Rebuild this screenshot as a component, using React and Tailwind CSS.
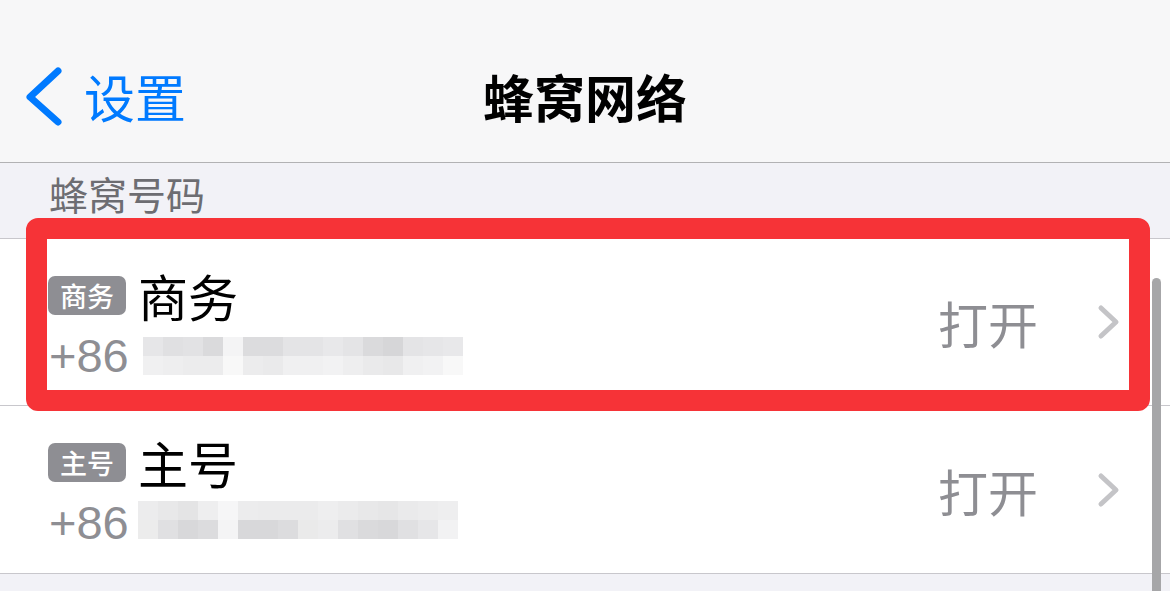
const cjk = "font-['Noto_Sans_CJK_SC','Noto_Sans',sans-serif]";

const blurBusiness = [
    ['bg-[#e6e6e8]', 'bg-[#e0e0e2]', 'bg-[#e2e2e4]', 'bg-[#dadadc]', 'bg-[#f4f4f5]', 'bg-[#dcdcde]', 'bg-[#dcdcde]', 'bg-[#e4e4e6]', 'bg-[#e4e4e6]', 'bg-[#e8e8ea]', 'bg-[#e4e4e6]', 'bg-[#dadadc]', 'bg-[#d6d6d8]', 'bg-[#e4e4e6]', 'bg-[#e6e6e8]', 'bg-[#e8e8ea]'],
    ['bg-[#f0f0f1]', 'bg-[#eeeeef]', 'bg-[#ececed]', 'bg-[#ececed]', 'bg-[#f8f8f8]', 'bg-[#ececed]', 'bg-[#eaeaeb]', 'bg-[#f0f0f1]', 'bg-[#f0f0f1]', 'bg-[#f2f2f3]', 'bg-[#eeeeef]', 'bg-[#eaeaeb]', 'bg-[#e8e8e9]', 'bg-[#f0f0f1]', 'bg-[#f2f2f3]', 'bg-[#f8f8f8]'],
];

const blurMain = [
    ['bg-[#ececed]', 'bg-[#e8e8e9]', 'bg-[#e4e4e5]', 'bg-[#eeeeef]', 'bg-[#f6f6f7]', 'bg-[#ececed]', 'bg-[#ebebec]', 'bg-[#ebebec]', 'bg-[#ebebec]', 'bg-[#eeeeef]', 'bg-[#ebebec]', 'bg-[#e8e8e9]', 'bg-[#e6e6e7]', 'bg-[#eaeaeb]', 'bg-[#ececed]', 'bg-[#eeeeef]'],
    ['bg-[#ececec]', 'bg-[#e0e0e2]', 'bg-[#d8d8da]', 'bg-[#dcdcde]', 'bg-[#f4f4f5]', 'bg-[#d8d8da]', 'bg-[#d8d8da]', 'bg-[#dcdcde]', 'bg-[#eaeaea]', 'bg-[#ececed]', 'bg-[#e0e0e2]', 'bg-[#dadadc]', 'bg-[#d8d8da]', 'bg-[#e0e0e2]', 'bg-[#e6e6e8]', 'bg-[#f2f2f3]'],
];

function Blur({ rows, offset }) {
    return (
        <div className={`flex flex-col ${offset}`}>
            {rows.map((row, r) => (
                <div key={r} className="flex">
                    {row.map((cls, c) => (
                        <div key={c} className={`h-[19px] w-[20px] ${cls}`} />
                    ))}
                </div>
            ))}
        </div>
    );
}

function Chevron() {
    return (
        <svg width="26" height="36" viewBox="0 0 26 36" className="shrink-0">
            <path d="M5 4 L20 18 L5 32" fill="none" stroke="#c4c4c7" strokeWidth="5" strokeLinecap="round" strokeLinejoin="round" />
        </svg>
    );
}

function SimRow({ badge, name, blur, blurOffset, bordered }) {
    return (
        <div className={`relative flex h-[167px] items-center ${bordered ? 'border-b border-[#c8c7cc]' : ''}`}>
            <div className="flex h-full flex-1 flex-col pl-[48px] pt-[26px]">
                <div className="flex h-[60px] items-center gap-[12px]">
                    <span className={`${cjk} flex h-[39px] w-[78px] items-center justify-center rounded-[7px] bg-[#8e8e93] text-[27px] font-medium leading-none text-white`}>
                        {badge}
                    </span>
                    <span className={`${cjk} text-[50px] leading-none text-black`}>{name}</span>
                </div>
                <div className="flex h-[60px] items-center">
                    <span className="pl-[1px] font-['Liberation_Sans',sans-serif] text-[47px] leading-none text-[#8e8e93]">+86</span>
                    <Blur rows={blur} offset={blurOffset} />
                </div>
            </div>
            <div className="flex items-center gap-[58px] pr-[48px]">
                <span className={`${cjk} text-[50px] leading-none text-[#8e8e93]`}>打开</span>
                <Chevron />
            </div>
        </div>
    );
}

export default function App() {
    return (
        <div className="relative h-[591px] w-[1170px] overflow-hidden bg-[#f2f2f7]">
            <header className="grid h-[163px] grid-cols-[1fr_auto_1fr] items-start border-b border-[#b2b2b4] bg-[#f7f7f8] pt-[60px]">
                <div className="flex h-[72px] items-center pl-[24px]">
                    <svg width="40" height="60" viewBox="0 0 40 60">
                        <path d="M34 5 L6 31 L34 56" fill="none" stroke="#007aff" strokeWidth="7" strokeLinecap="round" strokeLinejoin="round" />
                    </svg>
                    <span className={`${cjk} ml-[20px] text-[51px] leading-none text-[#007aff]`}>设置</span>
                </div>
                <h1 className={`${cjk} flex h-[72px] items-center text-[51px] font-bold leading-none text-black`}>蜂窝网络</h1>
                <div />
            </header>

            <div className="h-[75px] pl-[49px] pt-[8px]">
                <span className={`${cjk} text-[39px] leading-[44px] text-[#6d6d72]`}>蜂窝号码</span>
            </div>

            <section className="border-y border-[#c8c7cc] bg-white">
                <SimRow badge="商务" name="商务" blur={blurBusiness} blurOffset="ml-[14px] mt-[2px]" bordered />
                <SimRow badge="主号" name="主号" blur={blurMain} blurOffset="ml-[9px] mt-[-4px]" />
            </section>

            {/* annotation overlay */}
            <div className="absolute left-[26px] top-[218px] h-[193px] w-[1124px] rounded-[12px] border-[21px] border-[#f63337]" />

            {/* scroll indicator */}
            <div className="absolute left-[1152px] top-[278px] h-[340px] w-[9px] rounded-full bg-[#a6a6a8]" />
        </div>
    );
}
